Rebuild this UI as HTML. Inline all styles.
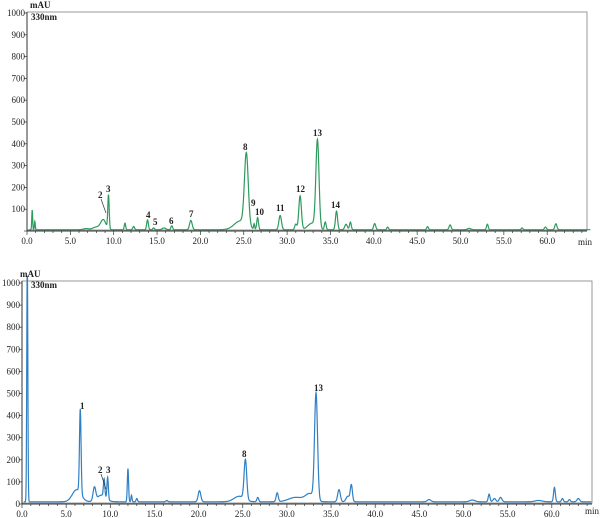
<!DOCTYPE html>
<html><head><meta charset="utf-8"><style>
html,body{margin:0;padding:0;background:#fff;width:600px;height:518px;overflow:hidden}
svg{display:block}
text{font-family:"Liberation Serif",serif;fill:#222}
.t{font-size:9px}
.b{font-size:9px;font-weight:bold}
</style></head><body>
<svg id="s" width="600" height="518" viewBox="0 0 600 518">
<rect x="27" y="12" width="560" height="218" fill="none" stroke="#999" stroke-width="1"/>
<line x1="27" y1="12" x2="27" y2="231" stroke="#333"/>
<line x1="27" y1="231" x2="587" y2="231" stroke="#333"/>
<rect x="22" y="281" width="570" height="222" fill="none" stroke="#999" stroke-width="1"/>
<line x1="22" y1="281" x2="22" y2="504" stroke="#333"/>
<line x1="22" y1="504" x2="592" y2="504" stroke="#333"/>
<g id="ax"></g>
<path id="p1" fill="none" stroke="#2e9a5e" stroke-width="1.2"/>
<path id="p2" fill="none" stroke="#2f7fc4" stroke-width="1.2"/>
<text class="b" x="30" y="8" font-size="10">mAU</text>
<text class="b" x="31" y="20">330nm</text>
<text class="b" x="20" y="277" font-size="10">mAU</text>
<text class="b" x="31" y="288">330nm</text>
<text class="t" x="578" y="245">min</text>
<text class="t" x="585" y="514">min</text>
<g class="b">
<text x="98" y="198">2</text><text x="106" y="192">3</text><text x="146" y="218">4</text>
<text x="153" y="225">5</text><text x="169" y="224">6</text><text x="189" y="217">7</text>
<text x="243" y="150">8</text><text x="251" y="206">9</text><text x="255" y="215">10</text>
<text x="276" y="211">11</text><text x="296" y="192">12</text><text x="313" y="136">13</text>
<text x="331" y="208">14</text>
<text x="80" y="409">1</text><text x="98" y="473">2</text><text x="106" y="473">3</text>
<text x="242" y="457">8</text><text x="314" y="391">13</text>
</g>
<line x1="101" y1="199" x2="106" y2="213" stroke="#333" stroke-width="0.7"/>
<line x1="101" y1="474" x2="106" y2="489" stroke="#333" stroke-width="0.7"/>
</svg>
<script>
function g(t,P,base){var v=base;for(var i=0;i<P.length;i++){var p=P[i];var d=(t-p[0])/p[2];v+=p[1]*Math.exp(-d*d/2);}return v;}
function mk(id,x0,kx,y0,ky,P,base,tmax){var d="";for(var t=0.2;t<=tmax;t+=0.02){var x=x0+kx*t,y=y0-ky*g(t,P,base);y=Math.max(y,y0-ky*1030);d+=(d?"L":"M")+x.toFixed(2)+" "+y.toFixed(2);}document.getElementById(id).setAttribute("d",d);}
var P1=[[0.6,90,0.05],[0.9,38,0.05],[8.8,45,0.3],[9.4,155,0.08],[11.3,30,0.08],[12.3,15,0.1],[13.9,45,0.1],[14.6,8,0.1],[15.8,8,0.2],[16.7,18,0.1],[18.9,42,0.15],[24.6,40,0.7],[25.3,330,0.22],[26.2,25,0.06],[26.6,55,0.1],[29.2,65,0.15],[31.0,25,0.12],[31.5,155,0.15],[32.9,30,0.5],[33.5,400,0.18],[34.4,35,0.1],[35.7,85,0.12],[36.8,25,0.15],[37.3,35,0.1],[40.1,28,0.12],[41.6,12,0.1],[46.2,14,0.1],[48.8,22,0.12],[51,6,0.2],[53.1,25,0.1],[57.1,8,0.1],[59.8,12,0.12],[61.0,27,0.12],[6.8,5,0.3],[8,12,0.4]];
var P2=[[0.6,1100,0.06],[6.2,55,0.5],[6.6,380,0.09],[8.2,60,0.15],[9.3,80,0.08],[9.7,100,0.08],[9.0,30,0.5],[12.0,150,0.07],[12.4,30,0.06],[13.0,15,0.08],[16.4,6,0.1],[20.1,50,0.15],[24.6,25,0.6],[25.3,180,0.15],[26.7,20,0.1],[28.9,40,0.12],[31.0,20,0.8],[32.6,35,0.5],[33.3,480,0.17],[35.9,55,0.15],[36.9,25,0.2],[37.3,75,0.12],[46.1,10,0.2],[51.0,8,0.3],[52.9,35,0.1],[53.5,15,0.15],[54.2,20,0.15],[58.5,6,0.4],[60.3,65,0.1],[61.2,15,0.1],[62,10,0.1],[63,15,0.15]];
mk("p1",27,8.67,231,0.218,P1,6,65);
mk("p2",22,8.83,504,0.221,P2,10,64.5);
var ax=document.getElementById("ax"),h="";
function tk(x0,kx,y0,ky,xe,tmax){for(var v=0;v<=1000;v+=100){var y=y0-ky*v;h+='<line x1="'+(x0-3)+'" y1="'+y+'" x2="'+x0+'" y2="'+y+'" stroke="#333" stroke-width="0.7"/>';if(v>0||y0>300)h+='<text class="t" text-anchor="end" x="'+(x0-2)+'" y="'+(y+3)+'">'+v+'</text>';}
for(var t=0;t<=tmax;t+=1){var x=x0+kx*t;var L=(t%5==0)?4:2;h+='<line x1="'+x+'" y1="'+y0+'" x2="'+x+'" y2="'+(y0+L)+'" stroke="#333" stroke-width="0.7"/>';if(t%5==0)h+='<text class="t" text-anchor="middle" x="'+x+'" y="'+(y0+13)+'">'+t.toFixed(1)+'</text>';}}
tk(27,8.67,231,0.218,587,64);
tk(22,8.83,504,0.221,592,64);
ax.innerHTML=h;
</script>
</body></html>
